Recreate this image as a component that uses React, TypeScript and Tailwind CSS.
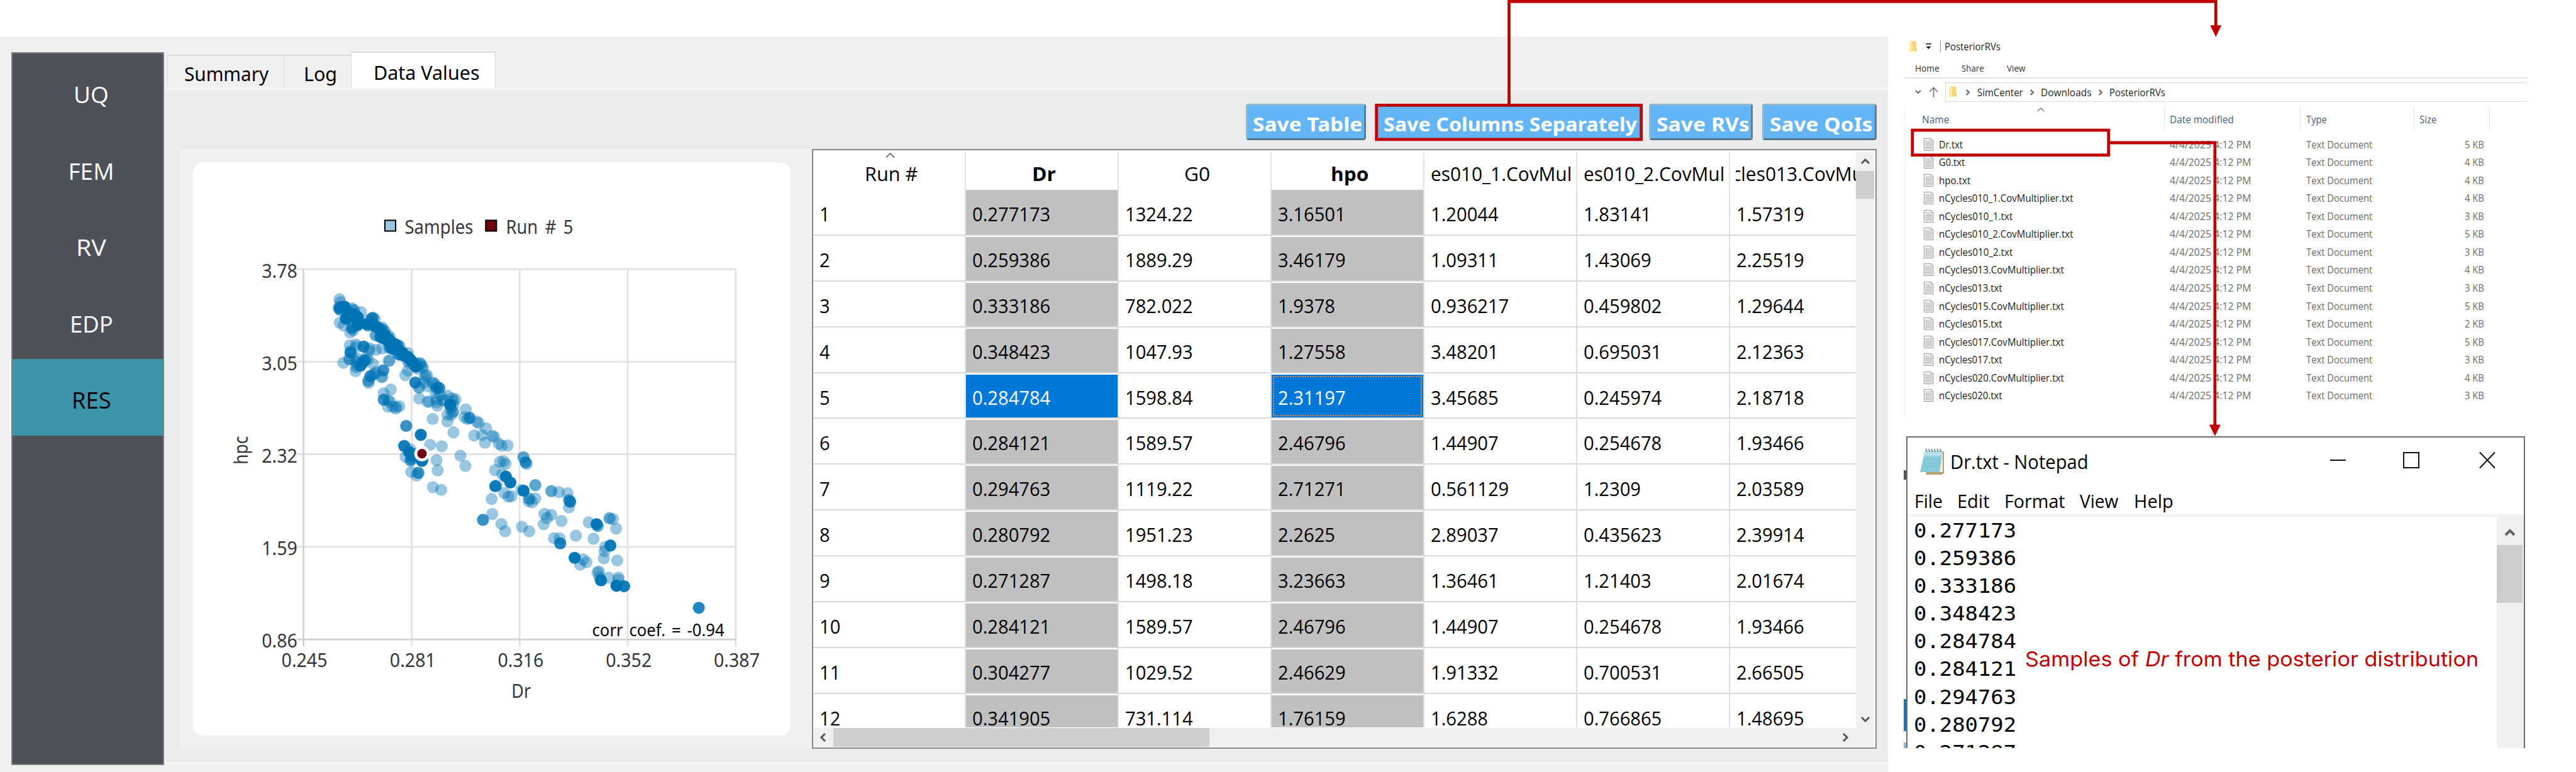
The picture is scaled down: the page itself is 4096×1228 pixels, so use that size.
import { useLayoutEffect, useRef, useState, type ReactNode } from "react";

const SEGOE = "font-['Open_Sans',sans-serif]";
const TAHOMA = "font-['Noto_Sans',sans-serif]";

/** One line of text stretched or condensed to the width of its own box. */
function Fit({ className = "", children }: { className?: string; children: ReactNode }) {
  const outer = useRef<HTMLSpanElement>(null);
  const inner = useRef<HTMLSpanElement>(null);
  const [k, setK] = useState(1);
  useLayoutEffect(() => {
    if (outer.current && inner.current && inner.current.offsetWidth > 0) {
      setK(outer.current.clientWidth / inner.current.offsetWidth);
    }
  }, []);
  return (
    <span ref={outer} className={"block shrink-0 text-left whitespace-nowrap " + className}>
      <span ref={inner} className="inline-block origin-left" style={{ transform: `scaleX(${k})` }}>
        {children}
      </span>
    </span>
  );
}

/* ---------- sidebar and tabs ---------- */

const sections = [
  { label: "UQ", w: "w-[56px]" },
  { label: "FEM", w: "w-[73px]" },
  { label: "RV", w: "w-[48px]" },
  { label: "EDP", w: "w-[69px]" },
  { label: "RES", w: "w-[63px]", active: true },
];

function Sidebar() {
  return (
    <nav className={"mt-[25px] ml-[18px] h-[1134px] w-[243px] shrink-0 border-2 border-[#7b7d84] bg-[#4f5159] text-[37px] leading-[50px] " + SEGOE}>
      {sections.map((s) => (
        <div
          key={s.label}
          className={
            "flex h-[121.5px] items-center justify-center pt-[9px] pl-[11px] " +
            (s.active ? "bg-[#3e94a9] text-black" : "text-white")
          }
        >
          <Fit className={s.w}>{s.label}</Fit>
        </div>
      ))}
    </nav>
  );
}

function Tabs() {
  return (
    <div className={"ml-[5px] flex h-[58px] items-start text-[31px] leading-[42px] text-black " + TAHOMA}>
      <div className="mt-[5px] h-[51px] w-[186px] border-t-2 border-r border-l border-[#d9d9d9] pt-[7px] pl-[26px]">
        <Fit className="w-[134px]">Summary</Fit>
      </div>
      <div className="mt-[5px] h-[51px] w-[106px] border-t-2 border-[#d9d9d9] pt-[7px] pl-[31px]">
        <Fit className="w-[53px]">Log</Fit>
      </div>
      <div className="h-[58px] w-[230px] border-t-2 border-r border-l border-[#d9d9d9] bg-white pt-[10px] pl-[35px]">
        <Fit className="w-[169px]">Data Values</Fit>
      </div>
    </div>
  );
}

/* ---------- scatter plot ---------- */

type Cloud = { ox: number; oy: number; sx: number; sy: number; pts: number[] };

/* Triples of x, y and the number of samples stacked on that spot. */
const clouds: Cloud[] = [
  {
    ox: 600, oy: 600, sx: 0.4146, sy: 0.3333,
    pts: [
      461,297,1, 467,317,1, 461,352,2, 459,362,3, 466,360,2, 466,375,1, 478,350,3, 490,350,9, 497,372,5, 497,432,8,
      510,390,6, 530,360,1, 537,370,1, 545,375,1, 582,387,1, 515,400,6, 530,410,6, 545,400,3, 563,422,8, 563,435,6,
      563,455,4, 562,478,9, 463,462,1, 484,480,1, 535,490,2, 530,497,1, 521,530,1, 538,515,1, 532,505,1,
      630,440,1, 645,430,3, 650,425,1, 660,437,1, 612,470,3, 620,475,3, 622,485,1, 630,470,5, 645,475,8, 655,480,6,
      665,488,6, 680,500,6, 695,505,2, 700,493,1, 710,515,1, 715,520,1, 700,540,3, 712,545,6, 720,560,3, 735,550,1,
      745,565,1, 665,550,2, 690,560,3, 700,565,9, 720,575,5, 740,580,6, 735,590,5, 755,600,5, 770,610,6, 780,615,2,
      790,620,2, 798,625,1, 745,625,2, 740,635,1, 750,640,3, 765,645,4, 780,640,6, 790,650,6, 800,660,8, 815,670,6,
      790,680,2, 800,685,2, 820,690,4, 835,695,4, 845,700,5, 850,710,4, 855,715,5, 860,720,4, 870,735,5, 855,745,1,
      845,730,1, 845,672,1, 890,768,9, 885,760,5, 880,750,4, 900,745,1, 915,745,1, 918,750,1, 925,770,1, 930,775,1,
      905,785,1, 519,620,1, 553,613,1, 559,628,1, 597,628,4, 523,660,1, 523,670,4, 630,640,1, 628,655,1, 666,651,1,
      700,642,1, 516,717,2, 483,742,1, 560,710,1, 545,720,1, 553,735,1, 602,725,4, 615,700,1, 620,720,1, 579,762,4,
      560,760,1, 590,745,3, 554,772,1, 552,800,1, 649,750,1, 740,725,1, 740,730,1, 635,835,3, 648,825,1, 667,807,1,
      660,820,1, 707,795,3, 702,838,1, 698,842,1, 622,870,1, 625,882,1, 625,865,1, 845,796,1, 831,828,1, 887,880,4,
      908,915,2, 945,830,1, 953,830,1, 940,848,1, 935,880,1, 710,955,1, 749,929,1, 710,999,3, 735,1005,1, 745,1012,1,
      733,1048,1, 760,1048,1, 777,1062,1, 780,1050,1, 797,1045,1, 958,905,1, 990,880,1, 985,885,1, 1000,895,1,
      1010,915,2, 1022,918,3, 1005,920,1, 909,991,1, 956,1014,1, 965,1014,1, 1007,995,1, 1006,1020,1, 1011,1042,1,
      1000,950,1, 1030,970,1, 1050,1000,1, 1068,972,1, 1040,1005,1, 1095,990,1, 1113,997,1, 1083,1035,9, 1100,1010,1,
      1100,1040,1, 1085,1060,1, 1100,1085,2, 1068,1105,1, 1090,1105,1, 1068,1152,1, 985,1134,1, 1102,1228,1,
      1171,1068,1, 1164,1122,1, 1180,1135,1, 1193,1127,3,
    ],
  },
  {
    ox: 860, oy: 940, sx: 0.3333, sy: 0.3333,
    pts: [
      260,163,3, 362,225,6, 246,303,5, 290,328,1, 280,345,8, 300,370,5, 256,379,1, 290,405,2, 297,395,2, 310,360,3,
      427,295,1, 509,305,1, 370,408,8, 375,395,2, 472,403,1, 480,474,1, 296,485,1, 345,491,3, 333,510,1, 447,591,1,
      505,611,1, 639,371,1, 674,443,1, 753,133,1, 767,143,1, 818,180,1, 735,230,1, 790,227,1, 863,232,1, 875,240,1,
      811,281,1, 907,287,1, 928,301,1, 969,300,1, 915,414,1, 940,410,1, 955,428,1, 881,472,1, 932,502,1, 957,518,6,
      988,559,7, 883,585,5, 892,580,1, 946,632,1, 974,658,1, 995,655,1, 857,674,1, 862,779,1, 797,820,3, 926,849,1,
      952,900,1, 1069,868,1, 1120,900,1, 1065,612,1, 1081,616,7, 1163,577,2, 1080,382,2, 1095,417,3, 1102,430,1,
    ],
  },
  {
    ox: 1100, oy: 900, sx: 0.4146, sy: 0.4146,
    pts: [
      322,637,2, 318,650,1, 338,657,1, 356,635,1, 446,594,2, 488,600,1, 537,606,1, 545,645,2, 552,654,4, 545,686,1,
      407,722,1, 446,728,1, 421,746,1, 403,780,1, 503,762,1, 656,770,1, 700,780,7, 707,790,2, 773,747,2, 792,751,1,
      810,805,1, 584,845,1, 683,862,1, 461,859,1, 492,860,1, 496,888,4, 749,908,1, 745,932,1, 778,900,5, 741,972,1,
      816,984,1, 577,969,7, 625,978,1, 643,994,1, 608,1008,1, 705,1052,1, 713,1045,1, 717,1078,1, 725,1096,7,
      768,1081,1, 823,1080,1, 823,1092,1, 812,1126,9, 855,1129,5, 1275,1250,4,
    ],
  },
];

const dots = clouds.flatMap((c) => {
  const out: { x: number; y: number; o: number }[] = [];
  for (let i = 0; i < c.pts.length; i += 3) {
    out.push({
      x: c.ox + c.pts[i] * c.sx,
      y: c.oy + c.pts[i + 1] * c.sy,
      o: 1 - Math.pow(0.6, c.pts[i + 2]),
    });
  }
  return out;
});

const xTicks = [
  { x: 707, t: "0.245" },
  { x: 959.5, t: "0.281" },
  { x: 1211, t: "0.316" },
  { x: 1462.8, t: "0.352" },
  { x: 1714.5, t: "0.387" },
];
const yTicks = [
  { y: 629, t: "3.78" },
  { y: 844.7, t: "3.05" },
  { y: 1060, t: "2.32" },
  { y: 1276.4, t: "1.59" },
  { y: 1492, t: "0.86" },
];

function Scatter() {
  return (
    <svg
      className={"block h-[911px] w-[950px] " + TAHOMA}
      viewBox="450 381 1392.3 1335.1"
      fontSize="44"
      fill="#37373b"
    >
      <g stroke="#e1e1e1" strokeWidth="4">
        {xTicks.map((t) => (
          <line key={t.t} x1={t.x} x2={t.x} y1="629" y2="1508" />
        ))}
        {yTicks.map((t) => (
          <line key={t.t} x1="691" x2="1714.5" y1={t.y} y2={t.y} />
        ))}
      </g>
      <path d="M707 627V1508M691 1492H1716" stroke="#d4d4d4" strokeWidth="4" fill="none" />
      {xTicks.map((t) => (
        <text key={t.t} x={t.x - 51} y="1556.5" textLength="107" lengthAdjust="spacingAndGlyphs">
          {t.t}
        </text>
      ))}
      {yTicks.map((t) => (
        <text key={t.t} x="610" y={t.y + 19.5} textLength="83" lengthAdjust="spacingAndGlyphs">
          {t.t}
        </text>
      ))}
      <text x="1192" y="1628" textLength="45" lengthAdjust="spacingAndGlyphs">Dr</text>
      <text transform="translate(577 1084) rotate(-90)" x="0" y="0" textLength="66" lengthAdjust="spacingAndGlyphs">
        hpc
      </text>

      <rect x="897" y="515" width="25" height="25" fill="#99c7e0" stroke="#000" strokeWidth="3" />
      <text x="943" y="547" textLength="160" lengthAdjust="spacingAndGlyphs">Samples</text>
      <rect x="1132" y="515" width="25" height="25" fill="#72000d" stroke="#000" strokeWidth="3" />
      <text x="1179" y="547" wordSpacing="7" textLength="157" lengthAdjust="spacingAndGlyphs">
        Run # 5
      </text>

      {dots.map((d, i) => (
        <circle key={i} cx={d.x} cy={d.y} r="14.1" fill="#0073b5" fillOpacity={d.o} />
      ))}
      <circle cx="983.4" cy="1059" r="18" fill="#fff" />
      <circle cx="983.4" cy="1059" r="11" fill="#72000d" />
      <text x="1380" y="1484.6" fontSize="39.5" wordSpacing="5" fill="#000" textLength="308" lengthAdjust="spacingAndGlyphs">
        corr coef. = -0.94
      </text>
    </svg>
  );
}

/* ---------- results table ---------- */

const rows = [
  ["1", "0.277173", "1324.22", "3.16501", "1.20044", "1.83141", "1.57319"],
  ["2", "0.259386", "1889.29", "3.46179", "1.09311", "1.43069", "2.25519"],
  ["3", "0.333186", "782.022", "1.9378", "0.936217", "0.459802", "1.29644"],
  ["4", "0.348423", "1047.93", "1.27558", "3.48201", "0.695031", "2.12363"],
  ["5", "0.284784", "1598.84", "2.31197", "3.45685", "0.245974", "2.18718"],
  ["6", "0.284121", "1589.57", "2.46796", "1.44907", "0.254678", "1.93466"],
  ["7", "0.294763", "1119.22", "2.71271", "0.561129", "1.2309", "2.03589"],
  ["8", "0.280792", "1951.23", "2.2625", "2.89037", "0.435623", "2.39914"],
  ["9", "0.271287", "1498.18", "3.23663", "1.36461", "1.21403", "2.01674"],
  ["10", "0.284121", "1589.57", "2.46796", "1.44907", "0.254678", "1.93466"],
  ["11", "0.304277", "1029.52", "2.46629", "1.91332", "0.700531", "2.66505"],
  ["12", "0.341905", "731.114", "1.76159", "1.6288", "0.766865", "1.48695"],
];

const headers = [
  { t: "Run #", w: "ml-[6px] w-[84px]", b: false },
  { t: "Dr", w: "ml-[7px] w-[38px]", b: true },
  { t: "G0", w: "ml-[7px] w-[41px]", b: false },
  { t: "hpo", w: "ml-[7px] w-[60px]", b: true },
  { t: "es010_1.CovMul", w: "ml-[2px] w-[224px]", b: false },
  { t: "es010_2.CovMul", w: "ml-[2px] w-[224px]", b: false },
];

const COLS = "grid w-[1701px] grid-cols-[243px_243px_243px_243px_243px_243px_243px]";

function Cell({ row, col, text }: { row: number; col: number; text: string }) {
  const marked = col === 1 || col === 3;
  const selected = marked && row === 4;
  const fill = selected ? "bg-[#0078d7] text-white" : marked ? "bg-[#c0c0c0]" : "";
  const focus = selected && col === 3 ? " outline-2 -outline-offset-4 outline-dotted outline-[#f08a2c]" : "";
  return (
    <div className={"border-r-2 border-r-[#dfdfdf] border-b-2 border-b-[#d9d9d9] " + (row === 0 ? "" : "pt-[2px]")}>
      <div className={"flex h-full items-center pl-[10px] " + (row === 0 ? "pt-[5px] " : "pt-[3px] ") + fill + focus}>
        <span className="origin-left scale-x-[0.94]">{text}</span>
      </div>
    </div>
  );
}

function Chevron({ className, d }: { className: string; d: string }) {
  return (
    <svg className={className} viewBox="0 0 16 16" fill="none" stroke="#555" strokeWidth="3">
      <path d={d} />
    </svg>
  );
}

function ResultsTable() {
  return (
    <div className={"flex h-[954px] w-[1693px] border-2 border-[#828790] bg-white text-[31px] leading-[42px] text-black " + SEGOE}>
      <div className="flex w-[1658px] shrink-0 flex-col">
        <div className="h-[918px] overflow-hidden">
          <div className={COLS + " h-[63px]"}>
            {headers.map((h, i) => (
              <div key={h.t} className={"relative mt-[3px] flex justify-center border-r-2 border-[#e5e5e5] pt-[13px] " + (h.b ? "font-bold" : "")}>
                {i === 0 && (
                  <svg className="absolute top-[1px] left-[115px] h-[8px] w-[15px]" viewBox="0 0 15 8" fill="none" stroke="#555" strokeWidth="1.5">
                    <path d="M1 7.5L7.5 1L14 7.5" />
                  </svg>
                )}
                <Fit className={h.w}>{h.t}</Fit>
              </div>
            ))}
            <div className="mt-[3px] ml-[9px] overflow-hidden pt-[13px]">
              <Fit className="-ml-[6px] w-[217px]">cles013.CovMul</Fit>
            </div>
          </div>
          {rows.map((r, i) => (
            <div key={r[0]} className={COLS + " h-[72.9px]"}>
              {r.map((t, j) => (
                <Cell key={j} row={i} col={j} text={t} />
              ))}
            </div>
          ))}
        </div>
        <div className="mt-[1px] flex h-[30px] items-center bg-[#f0f0f0]">
          <Chevron className="ml-[8px] h-[16px] w-[16px]" d="M11 2L5 8L11 14" />
          <div className="ml-[8px] h-full w-[598px] bg-[#cdcdcd]" />
          <Chevron className="ml-[1003px] h-[16px] w-[16px]" d="M5 2L11 8L5 14" />
        </div>
      </div>
      <div className="flex flex-col">
        <div className="mt-[2px] flex h-[917px] w-[29px] flex-col items-center bg-[#f0f0f0]">
          <Chevron className="mt-[8px] h-[16px] w-[16px]" d="M2 11L8 5L14 11" />
          <div className="mt-[7px] h-[44px] w-full bg-[#cdcdcd]" />
          <Chevron className="mt-[820px] h-[16px] w-[16px]" d="M2 5L8 11L14 5" />
        </div>
        <div className="h-[30px] w-[29px] bg-[#f0f0f0]" />
      </div>
    </div>
  );
}

function SaveButton({ className, textClass, label }: { className: string; textClass: string; label: string }) {
  return (
    <button
      className={
        "flex h-[58px] items-center rounded-[4px] border-t-3 border-r-3 border-b-3 border-l-3 border-t-[#8bbad0] border-r-[#5a7d92] border-b-[#557587] border-l-[#8bbad0] bg-[#64b5f6] pt-[6px] pl-[8px] text-[31px] leading-[42px] font-bold text-white " +
        className
      }
    >
      <Fit className={textClass}>{label}</Fit>
    </button>
  );
}

function Workbench() {
  return (
    <main className="mt-[58px] flex h-[1170px] w-[3002px] shrink-0 bg-[#f0f0f0]">
      <Sidebar />
      <div className="mt-[24px] w-[2741px]">
        <Tabs />
        <div className="ml-[2px] h-[1075px] border-y-3 border-[#f5f5f5] bg-[#ebebeb]">
          <div className={"ml-[1718px] flex h-[94px] items-start pt-[22px] " + TAHOMA}>
            <SaveButton className="w-[191px]" textClass="w-[174px]" label="Save Table" />
            <SaveButton className="ml-[15px] w-[424px]" textClass="ml-[2px] w-[403px]" label="Save Columns Separately" />
            <SaveButton className="ml-[11px] w-[165px]" textClass="ml-[1px] w-[148px]" label="Save RVs" />
            <SaveButton className="ml-[15px] w-[182px]" textClass="ml-[1px] w-[163px]" label="Save QoIs" />
          </div>
          <div className="ml-[22px] flex h-[955px] bg-[#f0f0f0]">
            <div className="mt-[22px] ml-[22px] h-[911px] w-[950px] rounded-[15px] bg-white">
              <Scatter />
            </div>
            <div className="ml-[34px]">
              <ResultsTable />
            </div>
            <div className="grow bg-[#ebebeb]" />
          </div>
        </div>
      </div>
    </main>
  );
}

/* ---------- file explorer ---------- */

function FolderIcon({ className }: { className: string }) {
  return (
    <svg className={"shrink-0 " + className} viewBox="0 0 54 82">
      <path d="M2 2Q2 0 5 0H49Q51 0 51 3V44L54 50V70Q54 72 51 72H20V10Z" fill="#f7d576" />
      <path d="M0 3L18 15Q20 17 20 22V72L15 82L0 74Z" fill="#ffe9a2" />
      <path d="M44 45L54 50V70Q54 72 51 72H44Z" fill="#f3cd66" />
    </svg>
  );
}

function FileIcon() {
  return (
    <svg className="h-[20px] w-[15.5px] shrink-0" viewBox="0 0 66 86" fill="none">
      <path d="M2 2H50L64 17V84H2Z" fill="#fafafa" stroke="#8f8f8f" strokeWidth="4" />
      <path d="M48 2V18H64" stroke="#9a9a9a" strokeWidth="4" />
      <path d="M9 18H42M9 28H58M9 37H58M9 46H58M9 55H58M9 64H58M9 73H58" stroke="#adadad" strokeWidth="4.5" />
    </svg>
  );
}

const files = [
  { n: "Dr.txt", w: "w-[38px]", s: "5 KB" },
  { n: "G0.txt", w: "w-[41px]", s: "4 KB" },
  { n: "hpo.txt", w: "w-[50px]", s: "4 KB" },
  { n: "nCycles010_1.CovMultiplier.txt", w: "w-[214px]", s: "4 KB" },
  { n: "nCycles010_1.txt", w: "w-[117px]", s: "3 KB" },
  { n: "nCycles010_2.CovMultiplier.txt", w: "w-[214px]", s: "5 KB" },
  { n: "nCycles010_2.txt", w: "w-[117px]", s: "3 KB" },
  { n: "nCycles013.CovMultiplier.txt", w: "w-[199px]", s: "4 KB" },
  { n: "nCycles013.txt", w: "w-[101px]", s: "3 KB" },
  { n: "nCycles015.CovMultiplier.txt", w: "w-[199px]", s: "5 KB" },
  { n: "nCycles015.txt", w: "w-[101px]", s: "2 KB" },
  { n: "nCycles017.CovMultiplier.txt", w: "w-[199px]", s: "5 KB" },
  { n: "nCycles017.txt", w: "w-[101px]", s: "3 KB" },
  { n: "nCycles020.CovMultiplier.txt", w: "w-[199px]", s: "4 KB" },
  { n: "nCycles020.txt", w: "w-[101px]", s: "3 KB" },
];

function Crumb({ className, textClass, label }: { className: string; textClass: string; label: string }) {
  return (
    <>
      <svg className={"h-[10px] w-[8px] shrink-0 " + className} viewBox="0 0 8 10" fill="none" stroke="#7a7a7a" strokeWidth="2.4">
        <path d="M1.5 1L6 5L1.5 9" />
      </svg>
      <Fit className={textClass}>{label}</Fit>
    </>
  );
}

function Explorer() {
  return (
    <section className={"h-[665px] pt-[59px] text-[16.6px] leading-[24px] text-[#1f1f1f] " + SEGOE}>
      <div className="flex h-[30px] items-center">
        <FolderIcon className="ml-[34px] h-[19px] w-[12px]" />
        <svg className="ml-[14px] h-[10px] w-[9px]" viewBox="0 0 9 10">
          <path d="M0 0H9V1.5H0ZM0.5 5H8.5L4.5 9Z" fill="#111" />
        </svg>
        <div className="ml-[14px] h-[18px] w-px bg-[#8a8a8a]" />
        <Fit className="ml-[6px] w-[89px]">PosteriorRVs</Fit>
      </div>
      <div className="mt-[9px] flex h-[22px] items-center text-[14px] text-[#333]">
        <Fit className="ml-[43px] w-[39px]">Home</Fit>
        <Fit className="ml-[35px] w-[36px]">Share</Fit>
        <Fit className="ml-[36px] w-[30px]">View</Fit>
      </div>
      <div className="mt-[3px] ml-[26px] h-[2px] w-[990px] bg-[#e4e4e4]" />
      <div className="mt-[6px] flex h-[31px] items-center">
        <svg className="ml-[43px] h-[7px] w-[10px]" viewBox="0 0 10 7" fill="none" stroke="#6f6f6f" strokeWidth="2.2">
          <path d="M1 1L5 5L9 1" />
        </svg>
        <svg className="ml-[12px] h-[17px] w-[15px]" viewBox="0 0 15 17" fill="none" stroke="#7a7a7a" strokeWidth="1.7">
          <path d="M7.5 17V1.5M1 8L7.5 1.5L14 8" />
        </svg>
        <div className="ml-[11px] flex h-[31px] w-[925px] items-center border border-r-0 border-[#d6d6d6]">
          <FolderIcon className="ml-[5px] h-[19px] w-[12px]" />
          <Crumb className="ml-[14px]" textClass="ml-[11px] w-[73px]" label="SimCenter" />
          <Crumb className="ml-[10px]" textClass="ml-[10px] w-[81px]" label="Downloads" />
          <Crumb className="ml-[10px]" textClass="ml-[10px] w-[89px]" label="PosteriorRVs" />
        </div>
      </div>
      <div className="mt-[8px] ml-[27px] h-[495px] border-l border-[#f0f0f0]">
        <div className="flex h-[37px] text-[#4c607a]">
          <div className="relative w-[412px] border-r border-[#e3e3e3] pt-[8px] pl-[26px]">
            <svg className="absolute top-[1px] left-[209px] h-[7px] w-[12px]" viewBox="0 0 12 7" fill="none" stroke="#777" strokeWidth="1.3">
              <path d="M0.7 6L6 1L11.3 6" />
            </svg>
            <Fit className="w-[43px]">Name</Fit>
          </div>
          <div className="w-[216px] border-r border-[#e3e3e3] pt-[8px] pl-[8px]">
            <Fit className="w-[102px]">Date modified</Fit>
          </div>
          <div className="w-[181px] border-r border-[#e3e3e3] pt-[8px] pl-[9px]">
            <Fit className="w-[33px]">Type</Fit>
          </div>
          <div className="w-[120px] border-r border-[#e3e3e3] pt-[8px] pl-[8px]">
            <Fit className="w-[27px]">Size</Fit>
          </div>
        </div>
        <div className="mt-[8px]">
          {files.map((f) => (
            <div key={f.n} className="grid h-[28.54px] grid-cols-[420px_217px_252px_31px] items-center pt-[1px] text-[#6d6d6d]">
              <div className="flex items-center pl-[29px] text-[#1a1a1a]">
                <FileIcon />
                <Fit className={"ml-[8px] " + f.w}>{f.n}</Fit>
              </div>
              <Fit className="w-[129px]">4/4/2025 4:12 PM</Fit>
              <Fit className="w-[105px]">Text Document</Fit>
              <Fit className="w-[31px]">{f.s}</Fit>
            </div>
          ))}
        </div>
      </div>
    </section>
  );
}

/* ---------- notepad ---------- */

const samples = ["0.277173", "0.259386", "0.333186", "0.348423", "0.284784", "0.284121", "0.294763", "0.280792", "0.271287"];

function NotepadIcon() {
  return (
    <svg className="h-[41px] w-[39px] shrink-0" viewBox="0 0 39 41">
      <path d="M12 4H38V39L34 41H9L10 37Z" fill="#b79f74" />
      <path d="M12 5H36V37H10Z" fill="#f4efe2" />
      <path d="M8 3H36L31 37H0Z" fill="#86cbdc" />
      <path d="M8 3H36L34.5 13H5.5Z" fill="#b5e2ea" />
      <path d="M6 12H34M5 17H33M4 22H33M3.500 27H32" stroke="#6fb6ca" strokeWidth="0.8" />
      <path d="M9 0L11 5M13.500 0L15.500 5M18 0L20 5M22.500 0L24.500 5M27 0L29 5M31.500 0L33.500 5" stroke="#5f6d73" strokeWidth="1.4" />
    </svg>
  );
}

function Notepad() {
  return (
    <section className="flex h-[497px] pl-[25px]">
      <div className="w-[4px] shrink-0 pt-[54px]">
        <div className="h-[15px] w-[4px] bg-[#5b5560]" />
        <div className="mt-[349px] h-[51px] w-[4px] bg-[#1f78a8]" />
        <div className="mt-[18px] h-[9px] w-[4px] bg-[#8fb8d0]" />
      </div>
      <div className={"flex h-[496px] w-[984px] flex-col border-2 border-b-0 border-[#6c6c6c] bg-white text-black " + SEGOE}>
        <div className="flex h-[76px] shrink-0 items-center text-[30.5px] leading-[42px]">
          <div className="ml-[20px]">
            <NotepadIcon />
          </div>
          <Fit className="ml-[9px] w-[220px]">Dr.txt - Notepad</Fit>
          <svg className="mb-[4px] ml-[383px] h-[28px] w-[267px]" viewBox="0 0 267 28" fill="none" stroke="#111" strokeWidth="2">
            <path d="M1 14H26M118 2H142V26H118ZM239 1.500L263 26.500M263 1.500L239 26.500" />
          </svg>
        </div>
        <div className="flex h-[46px] shrink-0 items-center pt-[4px] text-[29px] leading-[40px]">
          <Fit className="ml-[11px] w-[45px]">File</Fit>
          <Fit className="ml-[23px] w-[52px]">Edit</Fit>
          <Fit className="ml-[23px] w-[97px]">Format</Fit>
          <Fit className="ml-[23px] w-[61px]">View</Fit>
          <Fit className="ml-[25px] w-[63px]">Help</Fit>
        </div>
        <div className="h-[4px] shrink-0 bg-[#f0f0f0]" />
        <div className="flex min-h-0 grow">
          <div className="w-[937px] overflow-hidden pl-[10px] font-['DejaVu_Sans_Mono',monospace] text-[32px] leading-[44.1px]">
            {samples.map((s) => (
              <Fit key={s} className="h-[44.1px] w-[163px]">
                {s}
              </Fit>
            ))}
          </div>
          <div className="flex grow flex-col items-center bg-[#f0f0f0] pr-[2px]">
            <svg className="mt-[17px] h-[16px] w-[18px]" viewBox="0 0 18 16" fill="none" stroke="#606060" strokeWidth="4">
              <path d="M2 12L9 5L16 12" />
            </svg>
            <div className="mt-[12px] h-[92px] w-full bg-[#cdcdcd]" />
          </div>
        </div>
      </div>
    </section>
  );
}

/* ---------- annotations ---------- */

function Annotations() {
  return (
    <>
      <svg className="absolute inset-0 h-[1228px] w-[4096px]" viewBox="0 0 4096 1228" fill="none" stroke="#c00000" strokeWidth="4.8">
        <path d="M2399.500 166V2.400H3523.300V42" />
        <path d="M3514.300 40.300H3532.300L3523.300 58.700Z" fill="#c00000" stroke="none" />
        <rect x="2188.700" y="167.400" width="421" height="54.400" />
        <rect x="3040.800" y="207.100" width="312" height="39.600" />
        <path d="M3355 227H3521.900V677" />
        <path d="M3512.900 675.500H3530.900L3521.900 693.800Z" fill="#c00000" stroke="none" />
      </svg>
      <div className="absolute top-[1025px] left-[3220px] font-['Inter',sans-serif] text-[33px] leading-[46px] text-[#c00000]">
        <Fit className="w-[721px]">
          Samples of <i>Dr</i> from the posterior distribution
        </Fit>
      </div>
    </>
  );
}

export default function App() {
  return (
    <div className="relative flex h-[1228px] w-[4096px] overflow-hidden bg-white">
      <Workbench />
      <div className="w-[1094px] shrink-0">
        <Explorer />
        <div className="h-[29px]" />
        <Notepad />
      </div>
      <Annotations />
    </div>
  );
}
